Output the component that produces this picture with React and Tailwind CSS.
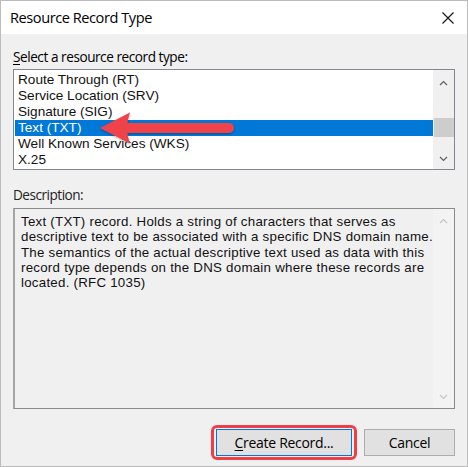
import React from 'react';

const ITEMS = [
  'Route Through (RT)',
  'Service Location (SRV)',
  'Signature (SIG)',
  'Text (TXT)',
  'Well Known Services (WKS)',
  'X.25',
];

const DESC = [
  'Text (TXT) record. Holds a string of characters that serves as',
  'descriptive text to be associated with a specific DNS domain name.',
  'The semantics of the actual descriptive text used as data with this',
  'record type depends on the DNS domain where these records are',
  'located. (RFC 1035)',
];

const Chevron = ({ up, color = '#606060' }) => (
  <svg width="9" height="6" viewBox="0 0 9 6" fill="none">
    <path d={up ? 'M1 5 L4.5 1.5 L8 5' : 'M1 1 L4.5 4.5 L8 1'} stroke={color} strokeWidth="1.2" />
  </svg>
);

const App = () => {
  return (
    <div className="relative w-[468px] h-[467px] border border-[#bcbcbc] bg-[#f0f0f0] flex flex-col text-black font-['Liberation_Sans',Arial,sans-serif]">
      {/* title bar */}
      <div className="h-[33px] bg-white flex items-center justify-between pl-[9px] pr-[13px]">
        <span className="text-[14.6px] font-['Open_Sans',sans-serif] tracking-[-0.45px]">Resource Record Type</span>
        <svg width="12" height="12" viewBox="0 0 12 12">
          <path d="M0.5 0.5 L11.5 11.5 M11.5 0.5 L0.5 11.5" stroke="#111" strokeWidth="1.1" />
        </svg>
      </div>

      <div className="flex-1 flex flex-col px-[12px] pt-[15px] pb-[6px]">
        <div className="h-[20px] text-[13.6px] leading-[16px] font-['Open_Sans',sans-serif] tracking-[-0.45px]">
          <span className="underline underline-offset-2">S</span>elect a resource record type:
        </div>

        {/* list box */}
        <div className="h-[101px] border border-[#828790] bg-white flex">
          <div className="flex-1 pt-[2px] pl-px">
            {ITEMS.map((it) => (
              <div
                key={it}
                className={`h-[16px] leading-[16px] text-[13.6px] pl-[3px] ${it === 'Text (TXT)' ? 'bg-[#0078d7] text-white' : 'text-[#111]'}`}
              >
                {it}
              </div>
            ))}
          </div>
          <div className="w-[21px] bg-[#f0f0f0] flex flex-col items-center justify-between pt-[10px] pb-[7px]">
            <Chevron up />
            <div className="w-[20px] h-[19px] bg-[#cdcdcd] mt-[32px]" />
            <div className="flex-1" />
            <Chevron />
          </div>
        </div>

        <div className="mt-[17px] h-[16px] leading-[16px] text-[13.6px] font-['Open_Sans',sans-serif] tracking-[-0.5px] text-[#222]">
          Description:
        </div>

        {/* description box */}
        <div className="mt-[5px] h-[201px] border border-[#8a8a8a] border-l-2 border-l-[#a5a5a5] flex">
          <div className="flex-1 pl-[6px] pt-[5px] text-[13.3px] leading-[15.3px] tracking-[0.25px] text-[#111]">
            {DESC.map((l) => (
              <div key={l} className="whitespace-nowrap">{l}</div>
            ))}
          </div>
          <div className="w-[21px] bg-[#f3f3f3] flex flex-col items-center justify-between pt-[9px] pb-[8px]">
            <Chevron up color="#c4c4c4" />
            <Chevron color="#c4c4c4" />
          </div>
        </div>

        {/* buttons */}
        <div className="mt-[16px] flex justify-end items-center gap-[7px]">
          <div className="border-[3px] border-[#f03e46] rounded-[6px] py-px px-[2px]">
            <button className="w-[136px] h-[27px] bg-[#e1e1e1] border border-[#0078d7] text-[14px] font-['Open_Sans',sans-serif] tracking-[-0.3px]">
              <span className="underline underline-offset-2">C</span>reate Record...
            </button>
          </div>
          <button className="w-[91px] h-[27px] bg-[#e1e1e1] border border-[#adadad] text-[14px] font-['Open_Sans',sans-serif] tracking-[-0.3px]">
            Cancel
          </button>
        </div>
      </div>

      {/* red annotation arrow */}
      <svg className="absolute left-0 top-0 pointer-events-none" width="468" height="467">
        <defs>
          <filter id="sh" x="-10%" y="-30%" width="120%" height="160%">
            <feDropShadow dx="0" dy="1" stdDeviation="1" floodColor="#000" floodOpacity="0.35" />
          </filter>
        </defs>
        <g filter="url(#sh)" fill="#f0434a">
          <path d="M124 122 L228 122 A5 5 0 0 1 228 132 L124 132 Z" />
          <path d="M99 127 L129 111.5 Q123 127 129 142.5 Z" />
        </g>
      </svg>
    </div>
  );
};

export default App;
